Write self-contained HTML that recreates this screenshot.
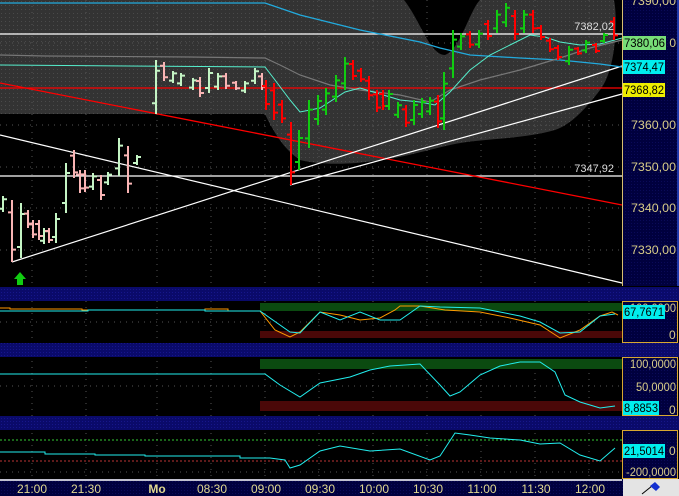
<!DOCTYPE html>
<html><head><meta charset="utf-8"><style>
html,body{margin:0;padding:0;background:#000;width:679px;height:496px;overflow:hidden}
svg{display:block}
text{font-family:"Liberation Sans",sans-serif}
</style></head><body>
<svg id="s" width="679" height="496" viewBox="0 0 679 496" xmlns="http://www.w3.org/2000/svg">
<defs>
<pattern id="gd" width="4" height="4" patternUnits="userSpaceOnUse"><rect width="4" height="4" fill="#333"/><rect x="1" y="1" width="1" height="1" fill="#4a4a4a"/></pattern>
<pattern id="bd" width="3" height="3" patternUnits="userSpaceOnUse"><rect width="3" height="3" fill="#0a0a6a"/><rect x="1" y="1" width="1" height="1" fill="#16168a"/></pattern>
<pattern id="nv" width="3" height="3" patternUnits="userSpaceOnUse"><rect width="3" height="3" fill="#00003e"/><rect x="1" y="1" width="1" height="1" fill="#0a0a58"/></pattern>
</defs>
<rect width="679" height="496" fill="#000"/>
<path d="M0,0 H404 C420,20 430,55 445,55 C460,50 470,10 480,0 H614 C618,20 616,70 600,90 C585,110 570,125 555,130 C520,140 480,138 450,145 C420,152 400,158 380,160 C350,165 320,165 300,160 C285,150 275,135 265,114 H0 Z" fill="url(#gd)"/>
<g stroke="#555" stroke-dasharray="1,5" stroke-width="1">
<path d="M32,0V286M86,0V286M157,0V286M211,0V286M265,0V286M319,0V286M373,0V286M427,0V286M481,0V286M535,0V286M589,0V286"/>
<path d="M0,43H622M0,125H622M0,167H622M0,208H622M0,250H622"/>
<path d="M32,301V479M86,301V479M157,301V479M211,301V479M265,301V479M319,301V479M373,301V479M427,301V479M481,301V479M535,301V479M589,301V479"/>
<path d="M0,322H622M0,386H622M0,472H622"/>
</g>
<line x1="0" y1="34" x2="622" y2="34" stroke="#fff" stroke-width="1.3"/>
<line x1="0" y1="176" x2="622" y2="176" stroke="#fff" stroke-width="1.3"/>
<line x1="0" y1="88" x2="622" y2="88" stroke="#f00" stroke-width="1.3"/>
<line x1="0" y1="83" x2="622" y2="205" stroke="#f00" stroke-width="1.3"/>
<line x1="0" y1="135" x2="622" y2="283" stroke="#fff" stroke-width="1.2"/>
<line x1="12" y1="262" x2="622" y2="66" stroke="#fff" stroke-width="1.2"/>
<line x1="290" y1="185" x2="622" y2="94" stroke="#fff" stroke-width="1.2"/>
<polyline fill="none" stroke="#2ad" stroke-width="1.3" points="0,3 265,3 300,15 360,30 420,42 440,48 470,55 520,58 560,60 600,64 622,67"/>
<polyline fill="none" stroke="#777" stroke-width="1.2" points="0,55 45,56 190,57 265,58 280,65 300,75 330,85 360,90 400,95 430,102 450,90 480,80 520,70 560,58 590,48 622,40"/>
<polyline fill="none" stroke="#5ec" stroke-width="1" points="0,65 265,67 275,80 290,100 300,112 320,108 345,92 360,88 380,94 400,100 420,102 435,105 450,92 470,70 490,55 510,45 530,35 545,37 560,42 580,45 600,44 622,38"/>
<g id="bars"></g>
<polygon points="20,272 14,279 17,279 17,285 23,285 23,279 26,279" fill="#1c1"/>
<text x="614" y="30" fill="#ddd" font-size="11" text-anchor="end">7382,02</text>
<text x="614" y="172" fill="#ddd" font-size="11" text-anchor="end">7347,92</text>
<rect x="623" y="0" width="56" height="286" fill="url(#nv)"/>
<line x1="622.5" y1="0" x2="622.5" y2="286" stroke="#d8c070"/>
<line x1="678" y1="0" x2="678" y2="286" stroke="#2a4acc" stroke-width="1.5"/>
<g fill="#d8cc88" font-size="12">
<text x="631" y="5" textLength="45" lengthAdjust="spacingAndGlyphs">7390,00</text><text x="631" y="129" textLength="45" lengthAdjust="spacingAndGlyphs">7360,00</text><text x="631" y="171" textLength="45" lengthAdjust="spacingAndGlyphs">7350,00</text><text x="631" y="212" textLength="45" lengthAdjust="spacingAndGlyphs">7340,00</text><text x="631" y="254" textLength="45" lengthAdjust="spacingAndGlyphs">7330,00</text>
</g>
<rect x="623" y="36" width="43" height="14" fill="#7d7"/><text x="624" y="47" font-size="12" fill="#000" textLength="41" lengthAdjust="spacingAndGlyphs">7380,06</text><text x="676" y="47" font-size="12" fill="#d8cc88" text-anchor="end">0</text>
<rect x="623" y="60" width="42" height="14" fill="#0ee"/><text x="624" y="71" font-size="12" fill="#000" textLength="40" lengthAdjust="spacingAndGlyphs">7374,47</text>
<rect x="623" y="83" width="42" height="14" fill="#ee0"/><text x="624" y="94" font-size="12" fill="#000" textLength="40" lengthAdjust="spacingAndGlyphs">7368,82</text>
<rect x="0" y="287" width="679" height="14" fill="url(#bd)"/>
<rect x="0" y="343" width="679" height="14" fill="url(#bd)"/>
<rect x="0" y="416" width="679" height="14" fill="url(#bd)"/>
<rect x="260" y="303" width="362" height="8" fill="#0b4a10"/>
<rect x="260" y="331" width="362" height="7" fill="#4a0808"/>
<polyline fill="none" stroke="#f90" stroke-width="1" points="0,308 10,308 10,309 82,309 82,310 155,310 205,310 205,309 228,309 228,311 260,311 275,330 290,337 300,332 320,312 340,315 360,320 380,318 395,310 400,306 420,306 445,310 480,312 510,318 540,325 560,338 580,330 600,316 612,312 618,315"/>
<polyline fill="none" stroke="#2ee" stroke-width="1" points="0,311 88,311 88,310 205,310 205,311 260,311 290,332 300,333 320,312 340,320 360,312 380,320 400,320 420,306 440,307 480,308 500,312 520,316 540,322 560,333 580,332 600,316 615,314"/>
<rect x="260" y="359" width="362" height="10" fill="#0b4a10"/>
<rect x="260" y="401" width="362" height="10" fill="#4a0808"/>
<polyline fill="none" stroke="#2ee" stroke-width="1" points="0,374 265,374 280,385 300,397 320,383 350,377 370,370 390,366 420,364 440,385 450,396 460,392 480,375 500,366 520,362 540,362 555,372 565,395 580,402 600,408 615,406"/>
<line x1="0" y1="440" x2="622" y2="440" stroke="#3c3" stroke-dasharray="2,2"/>
<line x1="0" y1="461" x2="622" y2="461" stroke="#b33" stroke-dasharray="2,2"/>
<polyline fill="none" stroke="#2ee" stroke-width="1" points="0,452 45,452 45,454 95,454 95,455 145,455 145,456 240,456 240,458 270,458 285,460 290,468 300,465 320,451 340,446 370,451 400,449 430,460 440,456 455,433 470,435 490,438 520,440 540,444 560,443 580,455 600,461 615,448"/>
<g fill="url(#nv)" stroke="#d8a830" stroke-width="1">
<rect x="622.5" y="301.5" width="55" height="41"/>
<rect x="622.5" y="357.5" width="55" height="58"/>
<rect x="622.5" y="430.5" width="55" height="48"/>
</g>
<g fill="#d8cc88" font-size="12">
<text x="630" y="312" textLength="46" lengthAdjust="spacingAndGlyphs">100,0000</text><text x="669" y="339">0</text>
<text x="630" y="368" textLength="46" lengthAdjust="spacingAndGlyphs">100,0000</text><text x="636" y="391" textLength="40" lengthAdjust="spacingAndGlyphs">50,0000</text><text x="669" y="414">0</text>
<text x="669" y="455">0</text><text x="626" y="476" textLength="50" lengthAdjust="spacingAndGlyphs">-200,0000</text>
</g>
<rect x="623" y="305" width="42" height="14" fill="#0ee"/><text x="624" y="316" font-size="12" fill="#000" textLength="40" lengthAdjust="spacingAndGlyphs">67,7671</text>
<rect x="623" y="401" width="36" height="14" fill="#0ee"/><text x="624" y="412" font-size="12" fill="#000" textLength="34" lengthAdjust="spacingAndGlyphs">8,8853</text>
<rect x="623" y="444" width="42" height="14" fill="#0ee"/><text x="624" y="455" font-size="12" fill="#000" textLength="40" lengthAdjust="spacingAndGlyphs">21,5014</text>
<rect x="0" y="479" width="623" height="17" fill="url(#nv)"/>
<line x1="0" y1="480" x2="622" y2="480" stroke="#fff" stroke-width="1.5"/>
<g fill="#e0d890" font-size="12" text-anchor="middle">
<text x="32" y="493">21:00</text><text x="86" y="493">21:30</text><text x="157" y="493" font-weight="bold">Mo</text><text x="212" y="493">08:30</text><text x="266" y="493">09:00</text><text x="320" y="493">09:30</text><text x="374" y="493">10:00</text><text x="428" y="493">10:30</text><text x="482" y="493">11:00</text><text x="536" y="493">11:30</text><text x="590" y="493">12:00</text>
</g>
<rect x="623" y="479" width="56" height="17" fill="#e4e4e4"/>
<line x1="642" y1="494" x2="652" y2="486" stroke="#000"/>
<path d="M650,486 L655,482 L660,487 L656,491 Z" fill="#1430d0"/>
</svg>
<script>
var B=[
[3,196,212,'g'],[12,200,262,'p'],[21,203,258,'g'],[28,210,228,'p'],[33,220,238,'p'],[39,220,240,'p'],[44,228,244,'g'],[49,228,243,'p'],[56,213,243,'g'],[66,163,213,'g'],[74,150,178,'p'],[80,170,193,'p'],[85,170,192,'p'],[93,173,190,'g'],[101,175,200,'p'],[108,172,185,'g'],[119,138,176,'g'],[128,146,193,'p'],[137,155,165,'g'],
[156,60,114,'g'],[164,62,81,'p'],[173,71,83,'g'],[181,73,86,'g'],[193,78,90,'g'],[200,77,97,'p'],[209,68,93,'g'],[218,73,90,'g'],[226,73,89,'p'],[236,81,90,'p'],[245,81,93,'g'],[255,68,84,'g'],[262,73,90,'p'],
[266,80,110,'r'],[274,83,120,'r'],[282,100,123,'r'],[291,122,185,'r'],[299,130,170,'g'],[309,100,148,'g'],[318,95,125,'g'],[326,88,115,'g'],[336,75,102,'g'],[345,57,90,'g'],[353,60,80,'r'],[361,68,82,'r'],[369,76,100,'r'],[377,90,112,'r'],[383,90,110,'r'],[389,90,110,'g'],[398,102,118,'g'],[406,105,127,'r'],[414,100,125,'g'],[422,98,118,'g'],[430,97,115,'g'],[438,95,128,'r'],[444,72,130,'g'],[453,30,78,'g'],[461,33,50,'g'],[470,31,48,'r'],[479,30,48,'g'],[488,20,40,'r'],[497,10,33,'g'],[506,3,27,'g'],[515,10,40,'r'],[524,10,33,'g'],[533,10,33,'r'],[541,25,40,'r'],[550,38,52,'r'],[558,45,60,'r'],[569,46,65,'g'],[578,47,55,'r'],[586,40,53,'g'],[596,43,53,'r'],[604,33,43,'g'],[614,17,40,'r']];
var C={g:'#1c1',r:'#f00',p:'#f9b4b4'};
var h='';
B.forEach(function(b){var x=b[0],hi=b[1],lo=b[2],t=b[3],c=t=='g'&&x<265?'#c4f4c4':C[t];
var up=(t=='g');var o=up?lo-(lo-hi)*0.2:hi+(lo-hi)*0.2,cl=up?hi+(lo-hi)*0.2:lo-(lo-hi)*0.2;
h+='<path d="M'+x+','+hi+'V'+lo+'M'+(x-4)+','+o.toFixed(1)+'H'+x+'M'+x+','+cl.toFixed(1)+'H'+(x+4)+'" stroke="'+c+'" stroke-width="2" fill="none"/>';});
document.getElementById('bars').innerHTML=h;
</script>
</body></html>
